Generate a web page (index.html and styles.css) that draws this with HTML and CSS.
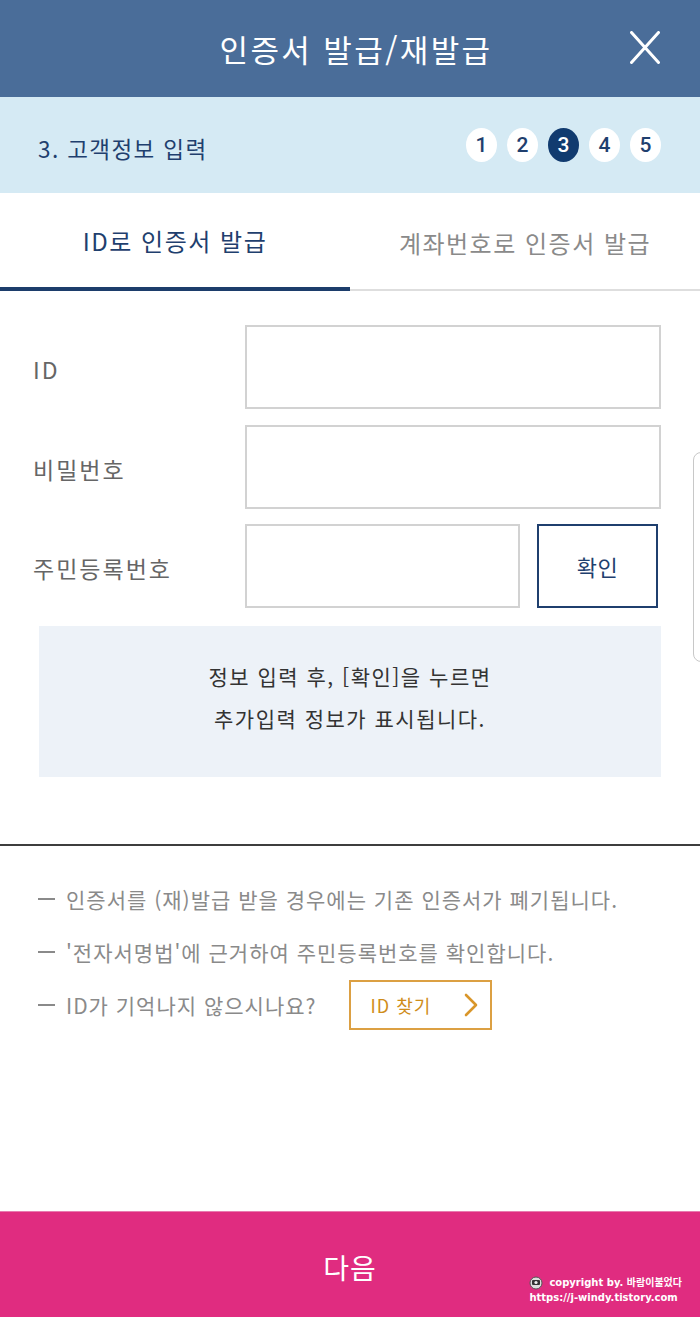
FILE: index.html
```html
<!DOCTYPE html>
<html lang="ko">
<head>
<meta charset="utf-8">
<title>인증서 발급/재발급</title>
<link rel="stylesheet" href="styles.css">
</head>
<body>
<div class="page">
  <header class="topbar">
    <span class="spacer"></span>
    <h1 class="title">인증서 발급/재발급</h1>
    <button class="close" aria-label="닫기">
      <svg width="30" height="33" viewBox="0 0 30 33"><path d="M1.5 1.5 L28.5 31.5 M28.5 1.5 L1.5 31.5" stroke="#fff" stroke-width="3" stroke-linecap="round" fill="none"/></svg>
    </button>
  </header>

  <div class="stepbar">
    <span class="step-label">3. 고객정보 입력</span>
    <ol class="steps">
      <li class="step">1</li>
      <li class="step">2</li>
      <li class="step active">3</li>
      <li class="step">4</li>
      <li class="step">5</li>
    </ol>
  </div>

  <nav class="tabs">
    <div class="tab active">ID로 인증서 발급</div>
    <div class="tab">계좌번호로 인증서 발급</div>
  </nav>

  <main class="content">
    <div class="form">
      <label class="label">ID</label>
      <div class="field"><div class="input"></div></div>
      <label class="label">비밀번호</label>
      <div class="field"><div class="input"></div></div>
      <label class="label">주민등록번호</label>
      <div class="field split"><div class="input"></div><button class="confirm">확인</button></div>
    </div>

    <div class="infobox">
      <p>정보 입력 후, [확인]을 누르면</p>
      <p>추가입력 정보가 표시됩니다.</p>
    </div>
  </main>

  <section class="notes">
    <div class="note"><span class="dash"></span><span>인증서를 (재)발급 받을 경우에는 기존 인증서가 폐기됩니다.</span></div>
    <div class="note"><span class="dash"></span><span>'전자서명법'에 근거하여 주민등록번호를 확인합니다.</span></div>
    <div class="note"><span class="dash"></span><span>ID가 기억나지 않으시나요?</span>
      <button class="findid"><span>ID 찾기</span>
        <svg width="14" height="24" viewBox="0 0 14 24"><path d="M2 2 L12 12 L2 22" stroke="#d9962a" stroke-width="2.6" fill="none" stroke-linecap="round" stroke-linejoin="round"/></svg>
      </button>
    </div>
  </section>

  <footer class="footer">
    <span class="next">다음</span>
    <div class="watermark">
      <div class="wm-line">
        <svg width="14" height="14" viewBox="0 0 14 14"><circle cx="7" cy="7" r="6" fill="#ddd" stroke="#555" stroke-width="1"/><rect x="3" y="4" width="8" height="5" rx="1" fill="#333"/><circle cx="7" cy="6.5" r="1.6" fill="#eee"/></svg>
        <span>copyright by. 바람이불었다</span>
      </div>
      <div class="wm-url">https://j-windy.tistory.com</div>
    </div>
  </footer>

  <div class="edge-handle"></div>
</div>
</body>
</html>
```

FILE: styles.css
```css
* { box-sizing: border-box; }
html, body { margin: 0; padding: 0; }
body {
  background: #fff;
  font-family: "Noto Sans CJK KR", "Noto Sans", sans-serif;
  color: #333;
}
.page {
  position: relative;
  width: 700px;
  height: 1317px;
  display: flex;
  flex-direction: column;
  overflow: hidden;
}

/* header */
.topbar {
  height: 97px;
  background: #4a6d99;
  display: grid;
  grid-template-columns: 1fr auto 1fr;
  align-items: center;
  padding-left: 12px;
}
.title {
  margin: 0;
  font-size: 31px;
  font-weight: 400;
  color: #fff;
  line-height: 40px;
  letter-spacing: 2.4px;
}
.close {
  justify-self: end;
  margin-right: 40px;
  background: none;
  border: 0;
  padding: 0;
  display: flex;
  margin-top: -2px;
}

/* step bar */
.stepbar {
  height: 96px;
  background: #d5eaf4;
  display: flex;
  align-items: center;
  justify-content: space-between;
  padding: 0 39px 0 38px;
}
.step-label {
  font-size: 22.5px;
  color: #1f3f6e;
  line-height: 30px;
  padding-top: 6px;
  letter-spacing: 1.4px;
}
.steps {
  list-style: none;
  margin: 0;
  padding: 0;
  display: flex;
  gap: 10px;
}
.step {
  width: 31px;
  height: 34px;
  border-radius: 50%;
  background: #fff;
  color: #1f3f6e;
  font-family: "Roboto", sans-serif;
  font-weight: 500;
  font-size: 21px;
  display: flex;
  align-items: center;
  justify-content: center;
}
.step.active {
  background: #113b6f;
  color: #fff;
}

/* tabs */
.tabs {
  display: flex;
  height: 98px;
}
.tab {
  flex: 1;
  display: flex;
  align-items: center;
  justify-content: center;
  font-size: 24px;
  letter-spacing: 1.5px;
  color: #8a8a8a;
  border-bottom: 2px solid #dedede;
  padding-top: 2px;
}
.tab.active {
  color: #1f3f6e;
  border-bottom: 4px solid #1c3d6b;
  padding-top: 0;
}

/* form */
.content {
  flex: 1;
  display: flex;
  flex-direction: column;
  border-bottom: 2px solid #3d3d3d;
}
.form {
  display: grid;
  grid-template-columns: 212px 1fr;
  row-gap: 15.5px;
  padding: 34px 39px 0 33px;
}
.label {
  display: flex;
  align-items: center;
  font-size: 23px;
  letter-spacing: 2px;
  color: #666;
  padding-top: 4px;
}
.field {
  height: 84px;
  display: flex;
  gap: 17px;
}
.input {
  flex: 1;
  border: 2px solid #d2d2d2;
  background: #fff;
}
.split .input { flex: 0 0 275px; }
.confirm {
  width: 121px;
  border: 2px solid #1f3f6e;
  background: #fff;
  font-family: inherit;
  font-size: 22px;
  letter-spacing: 0.5px;
  color: #1f3f6e;
  padding: 0;
}

.infobox {
  margin: 18px 39px 0 39px;
  height: 151px;
  background: #edf2f8;
  padding-top: 29px;
  text-align: center;
}
.infobox p {
  margin: 0;
  font-size: 21px;
  line-height: 42px;
  letter-spacing: 1.5px;
  color: #333;
}

/* notes */
.notes {
  height: 365px;
  padding: 26px 38px 0 38px;
  display: flex;
  flex-direction: column;
}
.note {
  height: 53px;
  display: flex;
  align-items: center;
  font-size: 21px;
  letter-spacing: 1px;
  color: #8a8a8a;
}
.dash {
  width: 17px;
  height: 2px;
  background: #8a8a8a;
  margin-right: 11px;
}
.findid {
  margin-left: 32px;
  width: 143px;
  height: 50px;
  border: 2px solid #dca043;
  background: #fff;
  display: flex;
  align-items: center;
  justify-content: space-between;
  padding: 0 12px 0 20px;
  font-family: inherit;
  font-size: 18px;
  letter-spacing: 1px;
  color: #cf8d1a;
}

/* footer */
.footer {
  position: relative;
  height: 106px;
  background: #e02c80;
  border-top: 1px solid #e87bb0;
  display: flex;
  align-items: center;
  justify-content: center;
}
.next {
  font-size: 28px;
  letter-spacing: 1px;
  color: #fff;
  line-height: 36px;
  margin-top: 4px;
}
.watermark {
  position: absolute;
  right: 18px;
  bottom: 12px;
  color: #fff;
  font-family: "DejaVu Sans", "Noto Sans CJK KR", sans-serif;
  font-size: 10px;
  font-weight: bold;
  line-height: 15px;
}
.wm-line {
  display: flex;
  align-items: center;
  gap: 6px;
}

/* right-edge handle overlay */
.edge-handle {
  position: absolute;
  left: 693px;
  top: 452px;
  width: 20px;
  height: 210px;
  border: 1px solid #c8c8c8;
  border-radius: 8px;
  background: #fff;
}
```
